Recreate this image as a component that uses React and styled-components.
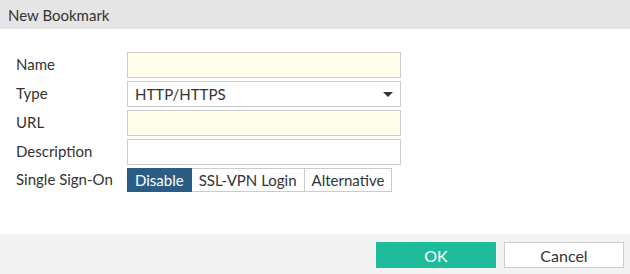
import React, { useState } from 'react'
import styled, { createGlobalStyle } from 'styled-components'

const GlobalStyle = createGlobalStyle`
  html, body {
    margin: 0;
    padding: 0;
    background: #fff;
  }
  body {
    font-family: Lato, "Liberation Sans", sans-serif;
    font-size: 15px;
    color: #333;
  }
`

const Dialog = styled.div`
  display: flex;
  flex-direction: column;
  width: 630px;
  height: 274px;
`

const Header = styled.header`
  height: 29px;
  display: flex;
  align-items: center;
  padding-left: 8px;
  background: #e5e5e5;
  font-size: 15px;
  color: #333;
`

const Body = styled.div`
  flex: 1;
  padding: 23px 0 0 16px;
`

const Form = styled.div`
  display: grid;
  grid-template-columns: 111px 274px;
  row-gap: 3px;
  align-items: center;
`

const Label = styled.label`
  font-size: 15px;
  color: #333;
  margin-top: -2px;
`

const Input = styled.input`
  box-sizing: border-box;
  height: 26px;
  width: 274px;
  border: 1px solid #cccccc;
  border-radius: 0;
  background: ${p => (p.$required ? '#fefeeb' : '#fff')};
  font-family: inherit;
  font-size: 15px;
  padding: 0 6px;
  outline: none;
`

const Select = styled.div`
  box-sizing: border-box;
  height: 26px;
  width: 274px;
  border: 1px solid #cccccc;
  display: flex;
  align-items: center;
  justify-content: space-between;
  padding: 0 7px 0 7px;
  font-size: 15px;
  color: #333;
`

const Caret = styled.span`
  width: 0;
  height: 0;
  border-left: 5px solid transparent;
  border-right: 5px solid transparent;
  border-top: 5px solid #333;
  margin-top: 1px;
`

const Toggle = styled.div`
  display: flex;
  height: 24px;
`

const ToggleButton = styled.button`
  box-sizing: border-box;
  height: 24px;
  padding: 0 7px;
  font-family: inherit;
  font-size: 15px;
  border: 1px solid ${p => (p.$active ? '#2a5d85' : '#cccccc')};
  border-left-width: ${p => (p.$first ? 1 : 0)}px;
  background: ${p => (p.$active ? '#2a5d85' : '#fff')};
  color: ${p => (p.$active ? '#fff' : '#333')};
  cursor: pointer;
`

const Footer = styled.footer`
  height: 40px;
  background: #f3f3f3;
  display: flex;
  justify-content: flex-end;
  align-items: flex-start;
  gap: 8px;
  padding: 8px 6px 0 0;
  box-sizing: border-box;
`

const Button = styled.button`
  box-sizing: border-box;
  width: 120px;
  height: 26px;
  font-family: inherit;
  font-size: 16px;
  border: 1px solid ${p => (p.$primary ? '#1fbc9c' : '#cccccc')};
  background: ${p => (p.$primary ? '#1fbc9c' : '#fff')};
  color: ${p => (p.$primary ? '#fff' : '#333')};
  cursor: pointer;
`

const ssoOptions = [
  { key: 'disable', label: 'Disable' },
  { key: 'ssl', label: 'SSL-VPN Login' },
  { key: 'alt', label: 'Alternative' }
]

export default function App() {
  const [sso, setSso] = useState('disable')
  return (
    <>
      <GlobalStyle />
      <Dialog>
        <Header>New Bookmark</Header>
        <Body>
          <Form>
            <Label>Name</Label>
            <Input $required />
            <Label>Type</Label>
            <Select>
              <span>HTTP/HTTPS</span>
              <Caret />
            </Select>
            <Label>URL</Label>
            <Input $required />
            <Label>Description</Label>
            <Input />
            <Label>Single Sign-On</Label>
            <Toggle>
              {ssoOptions.map((o, i) => (
                <ToggleButton
                  key={o.key}
                  $first={i === 0}
                  $active={sso === o.key}
                  onClick={() => setSso(o.key)}
                >
                  {o.label}
                </ToggleButton>
              ))}
            </Toggle>
          </Form>
        </Body>
        <Footer>
          <Button $primary>OK</Button>
          <Button>Cancel</Button>
        </Footer>
      </Dialog>
    </>
  )
}
